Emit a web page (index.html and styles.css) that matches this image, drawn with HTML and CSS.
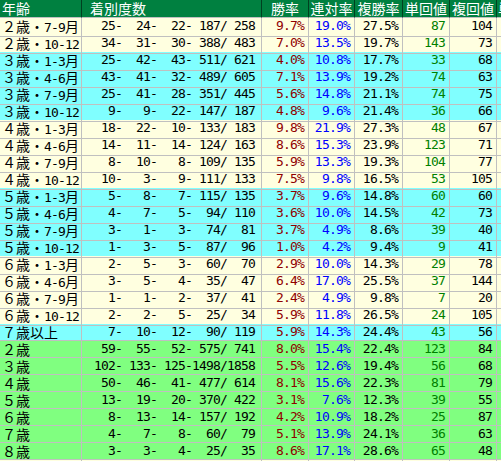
FILE: index.html
```html
<!DOCTYPE html>
<html lang="ja">
<head>
<meta charset="utf-8">
<title>年齢別成績</title>
<link rel="stylesheet" href="styles.css">
</head>
<body>
<div class="tbl">
  <div class="row head">
    <div class="c age">年齢</div>
    <div class="c cnt-h">着別度数</div>
    <div class="c hc">勝率</div>
    <div class="c hc">連対率</div>
    <div class="c hc">複勝率</div>
    <div class="c hc">単回値</div>
    <div class="c hc">複回値</div>
    <div class="c hx">単勝</div>
  </div>
  <div class="row cream"><div class="c age">２歳・<span class="h">7-9</span>月</div><div class="c cnt"><span class="f">25-</span><span class="f">24-</span><span class="f">22-</span><span class="f">187/</span><span class="l">258</span></div><div class="c num win">9.7%</div><div class="c num ren">19.0%</div><div class="c num fuku">27.5%</div><div class="c num tan">87</div><div class="c num fk">104</div><div class="c"></div></div>
  <div class="row cream"><div class="c age">２歳・<span class="h">10-12</span></div><div class="c cnt"><span class="f">34-</span><span class="f">31-</span><span class="f">30-</span><span class="f">388/</span><span class="l">483</span></div><div class="c num win">7.0%</div><div class="c num ren">13.5%</div><div class="c num fuku">19.7%</div><div class="c num tan">143</div><div class="c num fk">73</div><div class="c"></div></div>
  <div class="row cyan"><div class="c age">３歳・<span class="h">1-3</span>月</div><div class="c cnt"><span class="f">25-</span><span class="f">42-</span><span class="f">43-</span><span class="f">511/</span><span class="l">621</span></div><div class="c num win">4.0%</div><div class="c num ren">10.8%</div><div class="c num fuku">17.7%</div><div class="c num tan">33</div><div class="c num fk">68</div><div class="c"></div></div>
  <div class="row cyan"><div class="c age">３歳・<span class="h">4-6</span>月</div><div class="c cnt"><span class="f">43-</span><span class="f">41-</span><span class="f">32-</span><span class="f">489/</span><span class="l">605</span></div><div class="c num win">7.1%</div><div class="c num ren">13.9%</div><div class="c num fuku">19.2%</div><div class="c num tan">74</div><div class="c num fk">63</div><div class="c"></div></div>
  <div class="row cyan"><div class="c age">３歳・<span class="h">7-9</span>月</div><div class="c cnt"><span class="f">25-</span><span class="f">41-</span><span class="f">28-</span><span class="f">351/</span><span class="l">445</span></div><div class="c num win">5.6%</div><div class="c num ren">14.8%</div><div class="c num fuku">21.1%</div><div class="c num tan">74</div><div class="c num fk">75</div><div class="c"></div></div>
  <div class="row cyan"><div class="c age">３歳・<span class="h">10-12</span></div><div class="c cnt"><span class="f">9-</span><span class="f">9-</span><span class="f">22-</span><span class="f">147/</span><span class="l">187</span></div><div class="c num win">4.8%</div><div class="c num ren">9.6%</div><div class="c num fuku">21.4%</div><div class="c num tan">36</div><div class="c num fk">66</div><div class="c"></div></div>
  <div class="row cream"><div class="c age">４歳・<span class="h">1-3</span>月</div><div class="c cnt"><span class="f">18-</span><span class="f">22-</span><span class="f">10-</span><span class="f">133/</span><span class="l">183</span></div><div class="c num win">9.8%</div><div class="c num ren">21.9%</div><div class="c num fuku">27.3%</div><div class="c num tan">48</div><div class="c num fk">67</div><div class="c"></div></div>
  <div class="row cream"><div class="c age">４歳・<span class="h">4-6</span>月</div><div class="c cnt"><span class="f">14-</span><span class="f">11-</span><span class="f">14-</span><span class="f">124/</span><span class="l">163</span></div><div class="c num win">8.6%</div><div class="c num ren">15.3%</div><div class="c num fuku">23.9%</div><div class="c num tan">123</div><div class="c num fk">71</div><div class="c"></div></div>
  <div class="row cream"><div class="c age">４歳・<span class="h">7-9</span>月</div><div class="c cnt"><span class="f">8-</span><span class="f">10-</span><span class="f">8-</span><span class="f">109/</span><span class="l">135</span></div><div class="c num win">5.9%</div><div class="c num ren">13.3%</div><div class="c num fuku">19.3%</div><div class="c num tan">104</div><div class="c num fk">77</div><div class="c"></div></div>
  <div class="row cream"><div class="c age">４歳・<span class="h">10-12</span></div><div class="c cnt"><span class="f">10-</span><span class="f">3-</span><span class="f">9-</span><span class="f">111/</span><span class="l">133</span></div><div class="c num win">7.5%</div><div class="c num ren">9.8%</div><div class="c num fuku">16.5%</div><div class="c num tan">53</div><div class="c num fk">105</div><div class="c"></div></div>
  <div class="row cyan"><div class="c age">５歳・<span class="h">1-3</span>月</div><div class="c cnt"><span class="f">5-</span><span class="f">8-</span><span class="f">7-</span><span class="f">115/</span><span class="l">135</span></div><div class="c num win">3.7%</div><div class="c num ren">9.6%</div><div class="c num fuku">14.8%</div><div class="c num tan">60</div><div class="c num fk">60</div><div class="c"></div></div>
  <div class="row cyan"><div class="c age">５歳・<span class="h">4-6</span>月</div><div class="c cnt"><span class="f">4-</span><span class="f">7-</span><span class="f">5-</span><span class="f">94/</span><span class="l">110</span></div><div class="c num win">3.6%</div><div class="c num ren">10.0%</div><div class="c num fuku">14.5%</div><div class="c num tan">42</div><div class="c num fk">73</div><div class="c"></div></div>
  <div class="row cyan"><div class="c age">５歳・<span class="h">7-9</span>月</div><div class="c cnt"><span class="f">3-</span><span class="f">1-</span><span class="f">3-</span><span class="f">74/</span><span class="l">81</span></div><div class="c num win">3.7%</div><div class="c num ren">4.9%</div><div class="c num fuku">8.6%</div><div class="c num tan">39</div><div class="c num fk">40</div><div class="c"></div></div>
  <div class="row cyan"><div class="c age">５歳・<span class="h">10-12</span></div><div class="c cnt"><span class="f">1-</span><span class="f">3-</span><span class="f">5-</span><span class="f">87/</span><span class="l">96</span></div><div class="c num win">1.0%</div><div class="c num ren">4.2%</div><div class="c num fuku">9.4%</div><div class="c num tan">9</div><div class="c num fk">41</div><div class="c"></div></div>
  <div class="row cream"><div class="c age">６歳・<span class="h">1-3</span>月</div><div class="c cnt"><span class="f">2-</span><span class="f">5-</span><span class="f">3-</span><span class="f">60/</span><span class="l">70</span></div><div class="c num win">2.9%</div><div class="c num ren">10.0%</div><div class="c num fuku">14.3%</div><div class="c num tan">29</div><div class="c num fk">78</div><div class="c"></div></div>
  <div class="row cream"><div class="c age">６歳・<span class="h">4-6</span>月</div><div class="c cnt"><span class="f">3-</span><span class="f">5-</span><span class="f">4-</span><span class="f">35/</span><span class="l">47</span></div><div class="c num win">6.4%</div><div class="c num ren">17.0%</div><div class="c num fuku">25.5%</div><div class="c num tan">37</div><div class="c num fk">144</div><div class="c"></div></div>
  <div class="row cream"><div class="c age">６歳・<span class="h">7-9</span>月</div><div class="c cnt"><span class="f">1-</span><span class="f">1-</span><span class="f">2-</span><span class="f">37/</span><span class="l">41</span></div><div class="c num win">2.4%</div><div class="c num ren">4.9%</div><div class="c num fuku">9.8%</div><div class="c num tan">7</div><div class="c num fk">20</div><div class="c"></div></div>
  <div class="row cream"><div class="c age">６歳・<span class="h">10-12</span></div><div class="c cnt"><span class="f">2-</span><span class="f">2-</span><span class="f">5-</span><span class="f">25/</span><span class="l">34</span></div><div class="c num win">5.9%</div><div class="c num ren">11.8%</div><div class="c num fuku">26.5%</div><div class="c num tan">24</div><div class="c num fk">105</div><div class="c"></div></div>
  <div class="row cyan"><div class="c age">７歳以上</div><div class="c cnt"><span class="f">7-</span><span class="f">10-</span><span class="f">12-</span><span class="f">90/</span><span class="l">119</span></div><div class="c num win">5.9%</div><div class="c num ren">14.3%</div><div class="c num fuku">24.4%</div><div class="c num tan">43</div><div class="c num fk">56</div><div class="c"></div></div>
  <div class="row green"><div class="c age">２歳</div><div class="c cnt"><span class="f">59-</span><span class="f">55-</span><span class="f">52-</span><span class="f">575/</span><span class="l">741</span></div><div class="c num win">8.0%</div><div class="c num ren">15.4%</div><div class="c num fuku">22.4%</div><div class="c num tan">123</div><div class="c num fk">84</div><div class="c"></div></div>
  <div class="row green"><div class="c age">３歳</div><div class="c cnt"><span class="f">102-</span><span class="f">133-</span><span class="f">125-</span><span class="f">1498/</span><span class="l">1858</span></div><div class="c num win">5.5%</div><div class="c num ren">12.6%</div><div class="c num fuku">19.4%</div><div class="c num tan">56</div><div class="c num fk">68</div><div class="c"></div></div>
  <div class="row green"><div class="c age">４歳</div><div class="c cnt"><span class="f">50-</span><span class="f">46-</span><span class="f">41-</span><span class="f">477/</span><span class="l">614</span></div><div class="c num win">8.1%</div><div class="c num ren">15.6%</div><div class="c num fuku">22.3%</div><div class="c num tan">81</div><div class="c num fk">79</div><div class="c"></div></div>
  <div class="row green"><div class="c age">５歳</div><div class="c cnt"><span class="f">13-</span><span class="f">19-</span><span class="f">20-</span><span class="f">370/</span><span class="l">422</span></div><div class="c num win">3.1%</div><div class="c num ren">7.6%</div><div class="c num fuku">12.3%</div><div class="c num tan">39</div><div class="c num fk">55</div><div class="c"></div></div>
  <div class="row green"><div class="c age">６歳</div><div class="c cnt"><span class="f">8-</span><span class="f">13-</span><span class="f">14-</span><span class="f">157/</span><span class="l">192</span></div><div class="c num win">4.2%</div><div class="c num ren">10.9%</div><div class="c num fuku">18.2%</div><div class="c num tan">25</div><div class="c num fk">87</div><div class="c"></div></div>
  <div class="row green"><div class="c age">７歳</div><div class="c cnt"><span class="f">4-</span><span class="f">7-</span><span class="f">8-</span><span class="f">60/</span><span class="l">79</span></div><div class="c num win">5.1%</div><div class="c num ren">13.9%</div><div class="c num fuku">24.1%</div><div class="c num tan">36</div><div class="c num fk">63</div><div class="c"></div></div>
  <div class="row green"><div class="c age">８歳</div><div class="c cnt"><span class="f">3-</span><span class="f">3-</span><span class="f">4-</span><span class="f">25/</span><span class="l">35</span></div><div class="c num win">8.6%</div><div class="c num ren">17.1%</div><div class="c num fuku">28.6%</div><div class="c num tan">65</div><div class="c num fk">48</div><div class="c"></div></div>
  <div class="row cream"><div class="c age"></div><div class="c cnt"></div><div class="c num"></div><div class="c num"></div><div class="c num"></div><div class="c num"></div><div class="c num"></div><div class="c"></div></div>
</div>
</body>
</html>
```

FILE: styles.css
```css
html, body {
  margin: 0;
  padding: 0;
  background: #ffffff;
  overflow: hidden;
}

.tbl {
  width: 560px;
  font-family: "Noto Sans CJK JP", sans-serif;
  font-size: 14px;
  color: #000000;
}

.row {
  display: grid;
  grid-template-columns: 82px 180px 47px 46px 48px 47px 47px 63px;
  height: 17px;
}

.head {
  height: 18px;
  background: #008040;
  color: #ffffff;
}

.cream { background: #ffffe0; }
.cyan { background: #80ffff; }
.green { background: #80ff80; }

.c {
  box-sizing: border-box;
  border-right: 1px solid #c0c0c0;
  border-bottom: 1px solid #c0c0c0;
  line-height: 16px;
  white-space: nowrap;
  overflow: visible;
}

.head .c {
  border-right: 1px solid #004020;
  border-bottom: 1px solid #c0c0c0;
  line-height: 17px;
}

.age {
  padding-left: 2px;
}

.cnt-h {
  padding-left: 8px;
}

.hc {
  text-align: center;
}

.hx {
  padding-left: 1px;
}

.h, .cnt, .num {
  font-family: "DejaVu Sans Mono", "Liberation Mono", monospace;
  font-size: 13px;
  letter-spacing: -0.8px;
}

.cnt {
  text-align: right;
  padding-right: 6px;
}

.f, .l {
  display: inline-block;
  text-align: right;
}

.f { width: 35px; }
.l { width: 28px; }

.num {
  text-align: right;
  padding-right: 4px;
}

.win { color: #900000; }
.ren { color: #0000ff; }
.fuku { color: #000000; }
.tan { color: #008000; }
.fk { color: #000000; }
```
